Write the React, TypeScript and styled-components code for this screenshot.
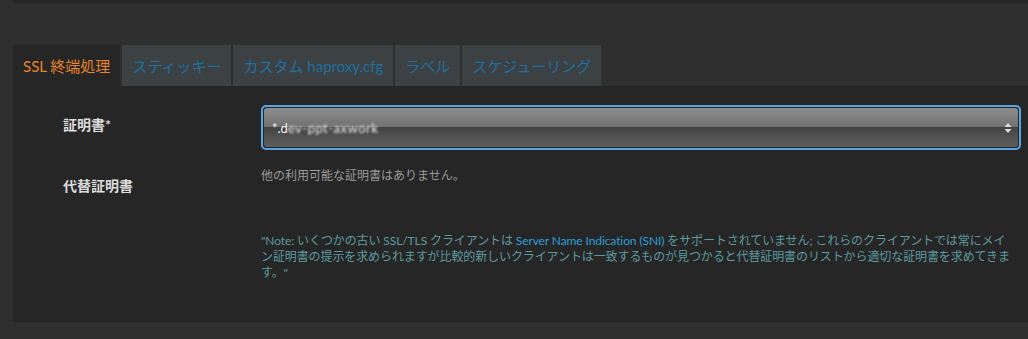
import React from 'react';
import styled, { createGlobalStyle } from 'styled-components';

const GlobalStyle = createGlobalStyle`
  html, body {
    margin: 0;
    padding: 0;
    background: #2f2f2f;
  }
  body {
    font-family: Lato, "Noto Sans CJK JP", sans-serif;
    color: #ddd;
  }
`;

const tabs = ['SSL 終端処理', 'スティッキー', 'カスタム haproxy.cfg', 'ラベル', 'スケジューリング'];

export default function App() {
  return (
    <Page>
      <GlobalStyle />
      <TopEdge />
      <TabBar>
        {tabs.map((t, i) => (
          <Tab key={t} $active={i === 0}>{t}</Tab>
        ))}
      </TabBar>
      <Panel>
        <FormRow>
          <Label>証明書*</Label>
          <Field>
            <Select>
              <SelectText>
                *.d<Blurred>ev-ppt-axwork</Blurred>
              </SelectText>
              <Arrows width="8" height="12" viewBox="0 0 8 12">
                <path d="M4 1 L7.5 5 L0.5 5 Z" fill="#ddd" />
                <path d="M4 11 L7.5 7 L0.5 7 Z" fill="#ddd" />
              </Arrows>
            </Select>
          </Field>
        </FormRow>
        <FormRow>
          <Label $top={12}>代替証明書</Label>
          <Field>
            <Hint>他の利用可能な証明書はありません。</Hint>
            <Note>
              "Note: いくつかの古い SSL/TLS クライアントは <Link>Server Name Indication (SNI)</Link> をサポートされていません; これらのクライアントでは常にメイン証明書の提示を求められますが比較的新しいクライアントは一致するものが見つかると代替証明書のリストから適切な証明書を求めてきます。"
            </Note>
          </Field>
        </FormRow>
      </Panel>
    </Page>
  );
}

const Page = styled.div`
  width: 1028px;
  height: 339px;
  overflow: hidden;
`;

const TopEdge = styled.div`
  height: 3px;
  margin-left: 13px;
  background: #262626;
`;

const TabBar = styled.div`
  display: flex;
  gap: 2px;
  margin: 42px 0 0 13px;
  height: 41px;
`;

const Tab = styled.div<{ $active?: boolean }>`
  display: flex;
  align-items: center;
  padding: 0 10px;
  font-size: 15px;
  background: ${p => (p.$active ? '#262626' : '#3c4144')};
  color: ${p => (p.$active ? '#e8842c' : '#1f6f9f')};
  white-space: nowrap;
`;

const Panel = styled.div`
  margin-left: 13px;
  height: 236px;
  background: #262626;
  padding: 19px 7px 0 0;
  box-sizing: border-box;
`;

const FormRow = styled.div`
  display: grid;
  grid-template-columns: 248px 1fr;
  margin-bottom: 14px;
`;

const Label = styled.div<{ $top?: number }>`
  padding-left: 50px;
  padding-top: ${p => p.$top ?? 10}px;
  font-size: 14px;
  line-height: 20px;
  font-weight: bold;
  color: #dcdcdc;
`;

const Field = styled.div`
  display: flex;
  flex-direction: column;
  min-width: 0;
`;

const Select = styled.div`
  position: relative;
  height: 39px;
  border: 2px solid #5ba3e2;
  border-radius: 5px;
  padding: 1px;
  background: #262626;
  box-sizing: content-box;
  display: flex;
  align-items: center;
`;

const SelectText = styled.div`
  flex: 1;
  height: 100%;
  display: flex;
  align-items: center;
  padding-left: 8px;
  border-radius: 3px;
  font-size: 13px;
  color: #f2f2f2;
  background: linear-gradient(
    to bottom,
    #8c8c8c 0%,
    #727272 48%,
    #444 50%,
    #535353 75%,
    #5e5e5e 100%
  );
`;

const Blurred = styled.span`
  filter: blur(0.9px);
  letter-spacing: 0.5px;
`;

const Arrows = styled.svg`
  position: absolute;
  right: 7px;
  top: 15px;
`;

const Hint = styled.div`
  font-size: 12px;
  line-height: 16px;
  color: #9a9a9a;
  margin-top: 4px;
`;

const Note = styled.div`
  margin-top: 49px;
  max-width: 752px;
  font-size: 12px;
  line-height: 16px;
  letter-spacing: -0.1px;
  color: #5c9a9f;
`;

const Link = styled.span`
  color: #2a9fd8;
`;
